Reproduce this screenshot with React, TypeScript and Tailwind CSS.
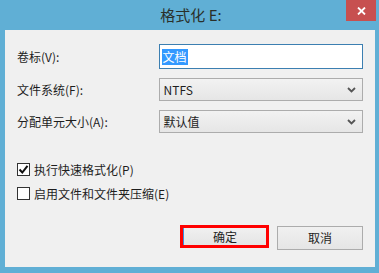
import * as React from "react";

const font = { fontFamily: '"Noto Sans CJK SC", "Noto Sans", sans-serif' };

function Chevron() {
  return (
    <svg width="9" height="6" viewBox="0 0 9 6" className="shrink-0">
      <path d="M1 1 L4.5 4.5 L8 1" fill="none" stroke="#555" strokeWidth="1.8" />
    </svg>
  );
}

function Select({ value }: { value: string }) {
  return (
    <div className="flex h-[23px] w-[205px] items-center justify-between border border-[#acacac] bg-gradient-to-b from-[#f2f2f2] to-[#e6e6e6] pl-[4px] pr-[6px]">
      <span className="text-[12px] text-[#1e1e1e]">{value}</span>
      <Chevron />
    </div>
  );
}

function Row({ label, children }: { label: string; children: React.ReactNode }) {
  return (
    <div className="flex items-center">
      <div className="w-[142px] text-[12px] text-[#1e1e1e]">{label}</div>
      {children}
    </div>
  );
}

function Check({ checked, label }: { checked?: boolean; label: string }) {
  return (
    <div className="flex h-[17px] items-center gap-[4px]">
      <div className="flex h-[13px] w-[13px] items-center justify-center border border-[#333] bg-white">
        {checked && (
          <svg width="11" height="11" viewBox="0 0 11 11">
            <path d="M1.5 5.5 L4.3 8.5 L9.5 1.8" fill="none" stroke="#111" strokeWidth="2" />
          </svg>
        )}
      </div>
      <span className="text-[12px] leading-[17px] text-[#1e1e1e]">{label}</span>
    </div>
  );
}

export default function App() {
  return (
    <div className="flex h-[273px] w-[379px] flex-col bg-[#60afd5]" style={font}>
      <div className="relative flex h-[30px] items-center justify-center">
        <span className="pl-[3px] text-[15px] text-[#2a2f2a]">格式化 E:</span>
        <div className="absolute right-[3px] top-0 flex h-[21px] w-[30px] items-center justify-center bg-[#c75050]">
          <svg width="9" height="8" viewBox="0 0 9 8">
            <path d="M1 0.5 L8 7.5 M8 0.5 L1 7.5" stroke="#fff" strokeWidth="1.8" />
          </svg>
        </div>
      </div>
      <div className="ml-[5px] mr-[4px] flex h-[237px] flex-col bg-[#f0f0f0] pl-[12px] pr-[12px] pt-[14px]">
        <div className="flex flex-col gap-[9px]">
          <Row label="卷标(V):">
            <div className="flex h-[25px] w-[205px] items-center border border-[#3c7fb1] bg-white pl-[2px]">
              <span className="bg-[#3399ff] px-[1px] text-[12px] leading-[16px] text-white">文档</span>
            </div>
          </Row>
          <Row label="文件系统(F):">
            <Select value="NTFS" />
          </Row>
          <Row label="分配单元大小(A):">
            <Select value="默认值" />
          </Row>
        </div>
        <div className="mt-[28px] flex flex-col gap-[7px]">
          <Check checked label="执行快速格式化(P)" />
          <Check label="启用文件和文件夹压缩(E)" />
        </div>
        <div className="mt-[23px] flex justify-end gap-[8px]">
          <div className="h-[23px] w-[89px] border-[3px] border-[#ff0000]">
            <div className="flex h-full items-center justify-center border-l border-[#3c8fe0] bg-gradient-to-b from-[#f0f0f0] to-[#e5e5e5] text-[12px] text-[#1e1e1e]">
              确定
            </div>
          </div>
          <div className="mt-[1px] flex h-[24px] w-[86px] items-center justify-center border border-[#acacac] bg-gradient-to-b from-[#f0f0f0] to-[#e5e5e5] text-[12px] text-[#1e1e1e]">
            取消
          </div>
        </div>
      </div>
    </div>
  );
}
